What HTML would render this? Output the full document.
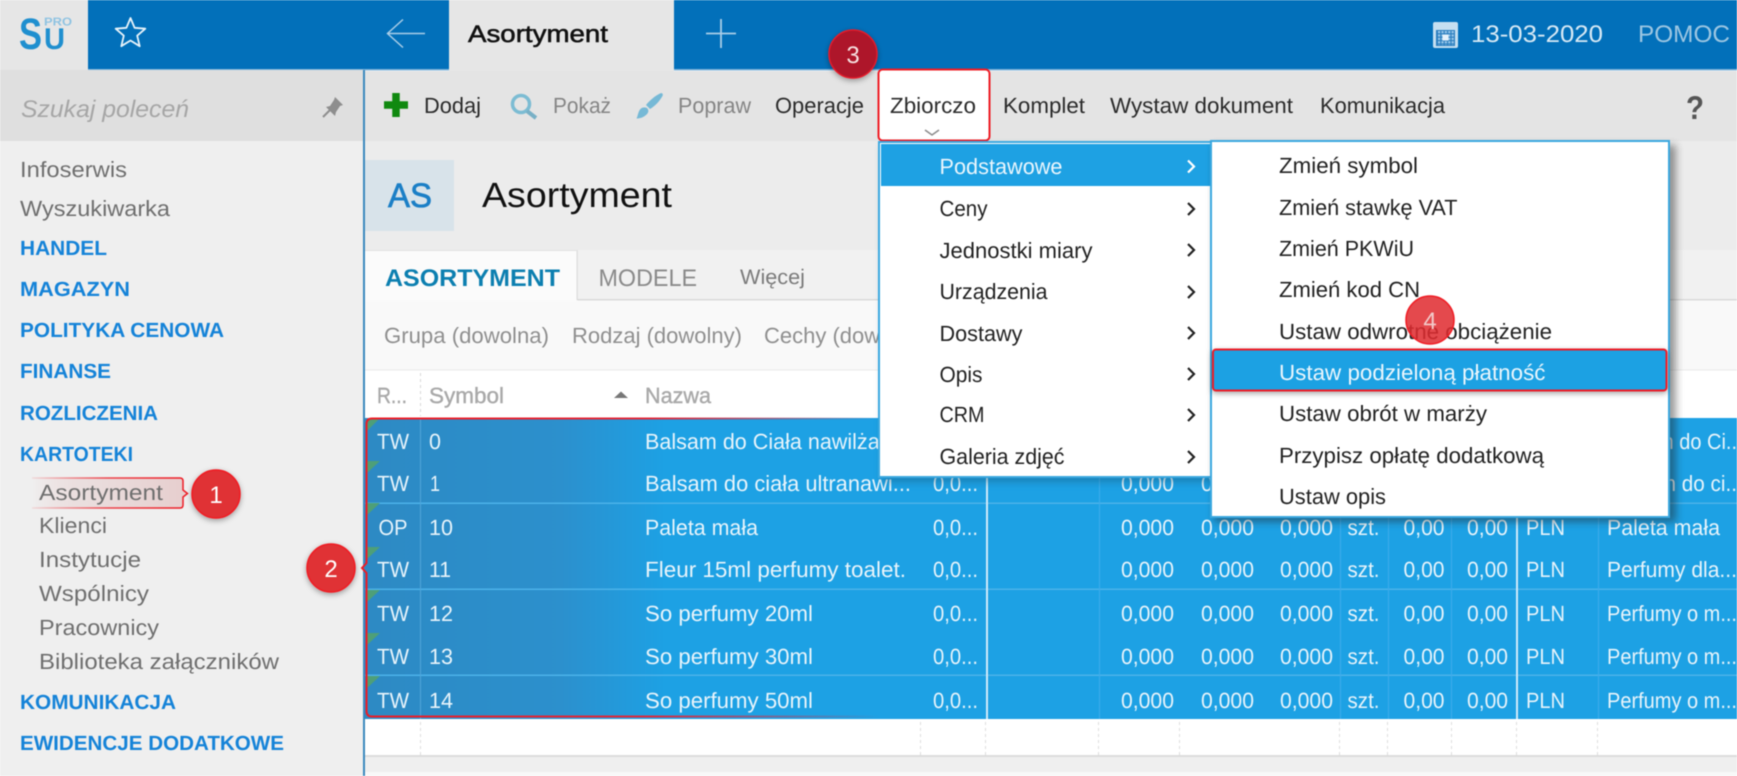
<!DOCTYPE html>
<html lang="pl"><head><meta charset="utf-8"><title>Asortyment</title>
<style>
html,body{margin:0;padding:0;width:1737px;height:776px;overflow:hidden;background:#fff}
svg{display:block;filter:blur(.45px)}
text{font-family:"Liberation Sans",sans-serif;font-size:22px;text-rendering:geometricPrecision}
.b{font-weight:700}
.s{fill:#6f6f6f}
.h{fill:#1583d8;font-weight:700;font-size:20.5px}
.k{fill:#2b2b2b}
.m{fill:#222}
.r{fill:#e8f4fb}
.c{fill:#fff;font-size:24px}
</style></head><body>
<svg xmlns="http://www.w3.org/2000/svg" width="1737" height="776" viewBox="0 0 1737 776">
<defs>
<linearGradient id="ov" gradientUnits="userSpaceOnUse" x1="366" x2="665" y1="0" y2="0"><stop offset="0" stop-color="#2d8ac4"/><stop offset=".65" stop-color="#2c90cd"/><stop offset="1" stop-color="#1da1e4"/></linearGradient>
<linearGradient id="rl" gradientUnits="userSpaceOnUse" x1="366" x2="880" y1="0" y2="0"><stop offset="0" stop-color="#ee1c25"/><stop offset=".55" stop-color="#e0283a"/><stop offset="1" stop-color="#e0283a" stop-opacity="0"/></linearGradient>
<linearGradient id="pk" gradientUnits="userSpaceOnUse" x1="32" x2="184" y1="0" y2="0"><stop offset="0" stop-color="#e9b9b9" stop-opacity="0"/><stop offset=".3" stop-color="#e6cfcf" stop-opacity=".5"/><stop offset="1" stop-color="#e3c0c0" stop-opacity=".7"/></linearGradient>
<linearGradient id="pl" gradientUnits="userSpaceOnUse" x1="32" x2="184" y1="0" y2="0"><stop offset="0" stop-color="#ee1c25" stop-opacity=".1"/><stop offset=".5" stop-color="#ee1c25" stop-opacity=".8"/><stop offset="1" stop-color="#ee1c25"/></linearGradient>
<filter id="sh" x="-10%" y="-10%" width="125%" height="125%"><feGaussianBlur stdDeviation="4"/></filter>
<filter id="cs" x="-30%" y="-30%" width="160%" height="160%"><feDropShadow dx="0" dy="2" stdDeviation="3" flood-color="#000" flood-opacity=".35"/></filter>
<pattern id="cal" width="3.4" height="3.4" patternUnits="userSpaceOnUse" x="1438" y="31"><rect width="2.2" height="2.2" fill="#9cc9ea"/></pattern>
</defs>

<!-- top bar -->
<rect x="0" y="0" width="1737" height="70" fill="#0270ba"/>
<rect x="0" y="0" width="88" height="70" fill="#e6e6e6"/>
<rect x="449" y="0" width="225" height="70" fill="#e6e6e6"/>
<rect x="88" y="69" width="1649" height="1.5" fill="#7fb4da"/>
<rect x="449" y="69" width="225" height="2" fill="#e6e6e6"/>
<text x="19" y="49" class="b" style="font-size:44px" fill="#1f8fcf" textLength="23" lengthAdjust="spacingAndGlyphs">S</text>
<text x="44" y="49" class="b" style="font-size:30px" fill="#1f8fcf" textLength="21" lengthAdjust="spacingAndGlyphs">U</text>
<text x="44" y="25.500" class="b" style="font-size:11.500px" fill="#8fc3e2" textLength="28" lengthAdjust="spacingAndGlyphs">PRO</text>
<path d="M130.5 18 L134.6 27.8 L145.3 28.7 L137.2 35.7 L139.7 46.2 L130.5 40.5 L121.3 46.2 L123.8 35.7 L115.7 28.7 L126.4 27.8 Z" fill="none" stroke="#e8f3fa" stroke-width="1.8" stroke-linejoin="round"/>
<path d="M425 33.500 H388 M403 19.500 L387.500 33.500 L403 47.500" fill="none" stroke="#a9cde7" stroke-width="1.500"/>
<text x="468" y="42" style="font-size:24px;stroke:#111;stroke-width:.55px" fill="#111" textLength="140" lengthAdjust="spacingAndGlyphs">Asortyment</text>
<path d="M706 33.500 H736 M721 19 V48" fill="none" stroke="#a9cde7" stroke-width="1.800"/>
<rect x="1433" y="22" width="25" height="26" rx="2" fill="#c5dff1"/>
<rect x="1436" y="30" width="19" height="16" fill="#2a7ebf"/>
<rect x="1437" y="31" width="17" height="14" fill="url(#cal)"/>
<rect x="1442.500" y="34.500" width="6" height="6" fill="#e6f2fb"/>
<text x="1471" y="42" style="font-size:24px" fill="#d7e9f5" textLength="132" lengthAdjust="spacingAndGlyphs">13-03-2020</text>
<text x="1638" y="42" style="font-size:24px" fill="#9cc6e2" textLength="92" lengthAdjust="spacingAndGlyphs">POMOC</text>

<!-- sidebar -->
<rect x="0" y="70" width="363" height="706" fill="#efefef"/>
<rect x="0" y="70" width="363" height="71" fill="#dfdfdf"/>
<rect x="363" y="70" width="2" height="706" fill="#3a88bd"/>
<text x="21" y="117" style="font-style:italic;font-size:24px" fill="#a6a6a6" textLength="168" lengthAdjust="spacingAndGlyphs">Szukaj poleceń</text>
<path d="M335 97 L343 105 L340 106 L336 112 L335 116 L326 107 L330 106 L334 100 Z" fill="#8e8e8e"/><path d="M330 110 L323 117" stroke="#8e8e8e" stroke-width="2"/>
<text x="20" y="177" class="s" textLength="107" lengthAdjust="spacingAndGlyphs">Infoserwis</text>
<text x="20" y="216" class="s" textLength="150" lengthAdjust="spacingAndGlyphs">Wyszukiwarka</text>
<text x="20" y="255" class="h" textLength="87" lengthAdjust="spacingAndGlyphs">HANDEL</text>
<text x="20" y="296" class="h" textLength="110" lengthAdjust="spacingAndGlyphs">MAGAZYN</text>
<text x="20" y="337" class="h" textLength="204" lengthAdjust="spacingAndGlyphs">POLITYKA CENOWA</text>
<text x="20" y="378" class="h" textLength="91" lengthAdjust="spacingAndGlyphs">FINANSE</text>
<text x="20" y="420" class="h" textLength="138" lengthAdjust="spacingAndGlyphs">ROZLICZENIA</text>
<text x="20" y="461" class="h" textLength="113" lengthAdjust="spacingAndGlyphs">KARTOTEKI</text>
<path d="M32 478 H180 Q183 478 183 481 V490 L187.500 493.500 L183 497 V505 Q183 508 180 508 H32 Z" fill="url(#pk)"/>
<path d="M32 478 H180 Q183 478 183 481 V490 L187.500 493.500 L183 497 V505 Q183 508 180 508 H32" fill="none" stroke="url(#pl)" stroke-width="1.500"/>
<text x="39" y="500" class="s" textLength="124" lengthAdjust="spacingAndGlyphs">Asortyment</text>
<text x="39" y="533" class="s" textLength="68" lengthAdjust="spacingAndGlyphs">Klienci</text>
<text x="39" y="567" class="s" textLength="102" lengthAdjust="spacingAndGlyphs">Instytucje</text>
<text x="39" y="601" class="s" textLength="110" lengthAdjust="spacingAndGlyphs">Wspólnicy</text>
<text x="39" y="635" class="s" textLength="120" lengthAdjust="spacingAndGlyphs">Pracownicy</text>
<text x="39" y="669" class="s" textLength="240" lengthAdjust="spacingAndGlyphs">Biblioteka załączników</text>
<text x="20" y="709" class="h" textLength="156" lengthAdjust="spacingAndGlyphs">KOMUNIKACJA</text>
<text x="20" y="750" class="h" textLength="264" lengthAdjust="spacingAndGlyphs">EWIDENCJE DODATKOWE</text>

<!-- toolbar -->
<rect x="365" y="71" width="1372" height="70" fill="#e4e4e4"/>
<rect x="365" y="141" width="1372" height="109" fill="#ececec"/>
<path d="M384 105 H408 M396 93 V117" stroke="#10890f" stroke-width="7.500"/>
<text x="424" y="113" class="k" textLength="57" lengthAdjust="spacingAndGlyphs">Dodaj</text>
<circle cx="521" cy="104" r="8.500" fill="none" stroke="#7cbcd3" stroke-width="3.500"/><path d="M527 111 L536 118" stroke="#78b0c6" stroke-width="4"/>
<text x="553" y="113" fill="#858585" textLength="58" lengthAdjust="spacingAndGlyphs">Pokaż</text>
<path d="M660 93.500 C662 92.500 663.500 94 662.500 96 C659 102 655 106 650 109 L646 105 C650 100 655 96 660 93.500 Z M636.500 118.500 C638 116 638 111 641 108.500 C643 107 646 107 647.500 108.500 C649 110.500 648.500 113 646 115 C643 117.500 640 118.500 636.500 118.500 Z" fill="#76b9d6"/>
<text x="678" y="113" fill="#858585" textLength="73" lengthAdjust="spacingAndGlyphs">Popraw</text>
<text x="775" y="113" class="k" textLength="89" lengthAdjust="spacingAndGlyphs">Operacje</text>
<text x="1003" y="113" class="k" textLength="82" lengthAdjust="spacingAndGlyphs">Komplet</text>
<text x="1110" y="113" class="k" textLength="183" lengthAdjust="spacingAndGlyphs">Wystaw dokument</text>
<text x="1320" y="113" class="k" textLength="125" lengthAdjust="spacingAndGlyphs">Komunikacja</text>
<text x="1686" y="119" class="b" style="font-size:33px" fill="#555" textLength="18" lengthAdjust="spacingAndGlyphs">?</text>

<!-- page head -->
<rect x="365" y="160" width="89" height="71" fill="#d8e3ea"/>
<text x="388" y="207" style="font-size:34px;stroke:#1b7fc6;stroke-width:.7px" fill="#1b7fc6" textLength="44" lengthAdjust="spacingAndGlyphs">AS</text>
<text x="482" y="207" style="font-size:35px" fill="#111" textLength="190" lengthAdjust="spacingAndGlyphs">Asortyment</text>

<!-- tabs -->
<rect x="365" y="250" width="1372" height="50" fill="#f1f1f1"/>
<rect x="365" y="299" width="1372" height="1.500" fill="#d9d9d9"/>
<rect x="365" y="250" width="212" height="51" fill="#fbfbfb"/>
<rect x="576.500" y="250" width="1.200" height="50" fill="#dcdcdc"/><rect x="365" y="250" width="212" height="1" fill="#e2e2e2"/>
<text x="385" y="286" class="b" style="font-size:24px" fill="#0c7fb0" textLength="175" lengthAdjust="spacingAndGlyphs">ASORTYMENT</text>
<text x="598.500" y="286" style="font-size:24px" fill="#8a8a8a" textLength="98.500" lengthAdjust="spacingAndGlyphs">MODELE</text>
<text x="740" y="284" style="font-size:21px" fill="#7b7b7b" textLength="65" lengthAdjust="spacingAndGlyphs">Więcej</text>

<!-- filters -->
<rect x="365" y="301" width="1372" height="69" fill="#f9f9f9"/>
<rect x="365" y="369.500" width="1372" height="1" fill="#eaeaea"/>
<text x="384" y="343" fill="#8f8f8f" textLength="165" lengthAdjust="spacingAndGlyphs">Grupa (dowolna)</text>
<text x="572" y="343" fill="#8f8f8f" textLength="170" lengthAdjust="spacingAndGlyphs">Rodzaj (dowolny)</text>
<text x="764" y="343" fill="#8f8f8f" textLength="165" lengthAdjust="spacingAndGlyphs">Cechy (dowolne)</text>

<!-- table header -->
<rect x="365" y="371" width="1372" height="47" fill="#fff"/>
<path d="M420.500 373 V416" stroke="#d8d8d8" stroke-dasharray="3 3"/>
<text x="377" y="403" fill="#a9a9a9" style="stroke:#a9a9a9;stroke-width:.4px" textLength="30" lengthAdjust="spacingAndGlyphs">R...</text>
<text x="429" y="403" fill="#a9a9a9" style="stroke:#a9a9a9;stroke-width:.4px" textLength="75" lengthAdjust="spacingAndGlyphs">Symbol</text>
<path d="M614 398 L621 391.500 L628 398 Z" fill="#777"/>
<text x="645" y="403" fill="#a9a9a9" style="stroke:#a9a9a9;stroke-width:.4px" textLength="66" lengthAdjust="spacingAndGlyphs">Nazwa</text>

<!-- table rows -->
<rect x="365" y="418" width="1372" height="301" fill="#1da1e4"/>
<rect x="365" y="418" width="300" height="301" fill="url(#ov)"/>
<g fill="#4bb2e9"><rect x="365" y="502.500" width="1372" height="1.500"/><rect x="365" y="588.500" width="1372" height="1.500"/><rect x="365" y="674.500" width="1372" height="1.500"/></g>
<g fill="#3eaceb"><rect x="420" y="418" width="1" height="301" fill="#4fa5d9"/><rect x="1099" y="418" width="1"  height="301"/><rect x="1340" y="418" width="1" height="301"/><rect x="1388" y="418" width="1" height="301"/><rect x="1451" y="418" width="1" height="301"/><rect x="1598" y="418" width="1" height="301"/></g>
<g fill="#cfeafa"><rect x="986" y="418" width="2" height="301"/><rect x="1516" y="418" width="2" height="301"/></g>
<g fill="#4e9f78"><path d="M367 419 H379 L367 431Z"/><path d="M367 461 H380 L367 473Z"/><path d="M367 503 H380 L367 515Z"/><path d="M367 547 H380 L367 559Z"/><path d="M367 590 H380 L367 602Z"/><path d="M367 633 H380 L367 645Z"/><path d="M367 676 H380 L367 688Z"/></g>

<text x="377" y="449" class="r" textLength="32" lengthAdjust="spacingAndGlyphs">TW</text><text x="429" y="449" class="r" textLength="12" lengthAdjust="spacingAndGlyphs">0</text>
<text x="645" y="449" class="r" textLength="273" lengthAdjust="spacingAndGlyphs">Balsam do Ciała nawilżający</text>
<text x="1607" y="449" class="r" textLength="130" lengthAdjust="spacingAndGlyphs">Balsam do Ci..</text>

<text x="377" y="491" class="r" textLength="32" lengthAdjust="spacingAndGlyphs">TW</text><text x="430" y="491" class="r" textLength="10" lengthAdjust="spacingAndGlyphs">1</text>
<text x="645" y="491" class="r" textLength="266" lengthAdjust="spacingAndGlyphs">Balsam do ciała ultranawi...</text>
<text x="933" y="491" class="r" textLength="45" lengthAdjust="spacingAndGlyphs">0,0...</text>
<text x="1121" y="491" class="r" textLength="53" lengthAdjust="spacingAndGlyphs">0,000</text><text x="1201" y="491" class="r" textLength="53" lengthAdjust="spacingAndGlyphs">0,000</text>
<text x="1607" y="491" class="r" textLength="130" lengthAdjust="spacingAndGlyphs">Balsam do ci..</text>

<text x="378.500" y="535" class="r" textLength="29" lengthAdjust="spacingAndGlyphs">OP</text><text x="429" y="535" class="r" textLength="24" lengthAdjust="spacingAndGlyphs">10</text>
<text x="645" y="535" class="r" textLength="113" lengthAdjust="spacingAndGlyphs">Paleta mała</text>
<text x="933" y="535" class="r" textLength="45" lengthAdjust="spacingAndGlyphs">0,0...</text>
<text x="1121" y="535" class="r" textLength="53" lengthAdjust="spacingAndGlyphs">0,000</text><text x="1201" y="535" class="r" textLength="53" lengthAdjust="spacingAndGlyphs">0,000</text><text x="1280" y="535" class="r" textLength="53" lengthAdjust="spacingAndGlyphs">0,000</text>
<text x="1347.500" y="535" class="r" textLength="32" lengthAdjust="spacingAndGlyphs">szt.</text><text x="1403.500" y="535" class="r" textLength="41" lengthAdjust="spacingAndGlyphs">0,00</text><text x="1467" y="535" class="r" textLength="41" lengthAdjust="spacingAndGlyphs">0,00</text><text x="1526" y="535" class="r" textLength="39" lengthAdjust="spacingAndGlyphs">PLN</text>
<text x="1607" y="535" class="r" textLength="113" lengthAdjust="spacingAndGlyphs">Paleta mała</text>

<text x="377" y="577" class="r" textLength="32" lengthAdjust="spacingAndGlyphs">TW</text><text x="429" y="577" class="r" textLength="22" lengthAdjust="spacingAndGlyphs">11</text>
<text x="645" y="577" class="r" textLength="261" lengthAdjust="spacingAndGlyphs">Fleur 15ml perfumy toalet.</text>
<text x="933" y="577" class="r" textLength="45" lengthAdjust="spacingAndGlyphs">0,0...</text>
<text x="1121" y="577" class="r" textLength="53" lengthAdjust="spacingAndGlyphs">0,000</text><text x="1201" y="577" class="r" textLength="53" lengthAdjust="spacingAndGlyphs">0,000</text><text x="1280" y="577" class="r" textLength="53" lengthAdjust="spacingAndGlyphs">0,000</text>
<text x="1347.500" y="577" class="r" textLength="32" lengthAdjust="spacingAndGlyphs">szt.</text><text x="1403.500" y="577" class="r" textLength="41" lengthAdjust="spacingAndGlyphs">0,00</text><text x="1467" y="577" class="r" textLength="41" lengthAdjust="spacingAndGlyphs">0,00</text><text x="1526" y="577" class="r" textLength="39" lengthAdjust="spacingAndGlyphs">PLN</text>
<text x="1607" y="577" class="r" textLength="130" lengthAdjust="spacingAndGlyphs">Perfumy dla...</text>

<text x="377" y="621" class="r" textLength="32" lengthAdjust="spacingAndGlyphs">TW</text><text x="429" y="621" class="r" textLength="24" lengthAdjust="spacingAndGlyphs">12</text>
<text x="645" y="621" class="r" textLength="168" lengthAdjust="spacingAndGlyphs">So perfumy 20ml</text>
<text x="933" y="621" class="r" textLength="45" lengthAdjust="spacingAndGlyphs">0,0...</text>
<text x="1121" y="621" class="r" textLength="53" lengthAdjust="spacingAndGlyphs">0,000</text><text x="1201" y="621" class="r" textLength="53" lengthAdjust="spacingAndGlyphs">0,000</text><text x="1280" y="621" class="r" textLength="53" lengthAdjust="spacingAndGlyphs">0,000</text>
<text x="1347.500" y="621" class="r" textLength="32" lengthAdjust="spacingAndGlyphs">szt.</text><text x="1403.500" y="621" class="r" textLength="41" lengthAdjust="spacingAndGlyphs">0,00</text><text x="1467" y="621" class="r" textLength="41" lengthAdjust="spacingAndGlyphs">0,00</text><text x="1526" y="621" class="r" textLength="39" lengthAdjust="spacingAndGlyphs">PLN</text>
<text x="1607" y="621" class="r" textLength="130" lengthAdjust="spacingAndGlyphs">Perfumy o m...</text>

<text x="377" y="664" class="r" textLength="32" lengthAdjust="spacingAndGlyphs">TW</text><text x="429" y="664" class="r" textLength="24" lengthAdjust="spacingAndGlyphs">13</text>
<text x="645" y="664" class="r" textLength="168" lengthAdjust="spacingAndGlyphs">So perfumy 30ml</text>
<text x="933" y="664" class="r" textLength="45" lengthAdjust="spacingAndGlyphs">0,0...</text>
<text x="1121" y="664" class="r" textLength="53" lengthAdjust="spacingAndGlyphs">0,000</text><text x="1201" y="664" class="r" textLength="53" lengthAdjust="spacingAndGlyphs">0,000</text><text x="1280" y="664" class="r" textLength="53" lengthAdjust="spacingAndGlyphs">0,000</text>
<text x="1347.500" y="664" class="r" textLength="32" lengthAdjust="spacingAndGlyphs">szt.</text><text x="1403.500" y="664" class="r" textLength="41" lengthAdjust="spacingAndGlyphs">0,00</text><text x="1467" y="664" class="r" textLength="41" lengthAdjust="spacingAndGlyphs">0,00</text><text x="1526" y="664" class="r" textLength="39" lengthAdjust="spacingAndGlyphs">PLN</text>
<text x="1607" y="664" class="r" textLength="130" lengthAdjust="spacingAndGlyphs">Perfumy o m...</text>

<text x="377" y="708" class="r" textLength="32" lengthAdjust="spacingAndGlyphs">TW</text><text x="429" y="708" class="r" textLength="24" lengthAdjust="spacingAndGlyphs">14</text>
<text x="645" y="708" class="r" textLength="168" lengthAdjust="spacingAndGlyphs">So perfumy 50ml</text>
<text x="933" y="708" class="r" textLength="45" lengthAdjust="spacingAndGlyphs">0,0...</text>
<text x="1121" y="708" class="r" textLength="53" lengthAdjust="spacingAndGlyphs">0,000</text><text x="1201" y="708" class="r" textLength="53" lengthAdjust="spacingAndGlyphs">0,000</text><text x="1280" y="708" class="r" textLength="53" lengthAdjust="spacingAndGlyphs">0,000</text>
<text x="1347.500" y="708" class="r" textLength="32" lengthAdjust="spacingAndGlyphs">szt.</text><text x="1403.500" y="708" class="r" textLength="41" lengthAdjust="spacingAndGlyphs">0,00</text><text x="1467" y="708" class="r" textLength="41" lengthAdjust="spacingAndGlyphs">0,00</text><text x="1526" y="708" class="r" textLength="39" lengthAdjust="spacingAndGlyphs">PLN</text>
<text x="1607" y="708" class="r" textLength="130" lengthAdjust="spacingAndGlyphs">Perfumy o m...</text>

<!-- selection annotation -->
<path d="M880 418.500 H372 Q366.500 418.500 366.500 424 V563 L362 568 L366.500 573 V711 Q366.500 716.500 372 716.500 H880" fill="none" stroke="url(#rl)" stroke-width="2"/>

<!-- empty grid + scrollbar -->
<rect x="365" y="719" width="1372" height="36" fill="#fff"/>
<path d="M420.500 722 V755 M920.500 722 V755 M985.500 722 V755 M1098.500 722 V755 M1179.500 722 V755 M1339.500 722 V755 M1387.500 722 V755 M1451.500 722 V755 M1516.500 722 V755 M1597.500 722 V755" stroke="#dcdcdc" stroke-dasharray="3 3"/>
<rect x="365" y="755" width="1372" height="2" fill="#dcdcdc"/>
<rect x="365" y="757" width="1372" height="15" fill="#efefef"/>
<rect x="365" y="772" width="1372" height="4" fill="#f8f8f8"/>

<!-- Zbiorczo button -->
<rect x="878.500" y="69.500" width="111" height="71" rx="4" fill="#fff" stroke="#ee1c25" stroke-width="2"/>
<text x="890" y="113" class="k" textLength="86" lengthAdjust="spacingAndGlyphs">Zbiorczo</text>
<path d="M925 130 L932 135 L939 130" fill="none" stroke="#8a8a8a" stroke-width="1.500"/>

<!-- menu 1 -->
<rect x="882" y="146" width="334" height="336" fill="#15516f" opacity=".4" filter="url(#sh)"/>
<rect x="879" y="142" width="333" height="335" fill="#fff" stroke="#3aa8e0" stroke-width="2"/>
<rect x="881" y="144" width="330" height="42" fill="#1ea1e3"/>
<text x="939.500" y="174" fill="#eaf6fd" textLength="123" lengthAdjust="spacingAndGlyphs">Podstawowe</text>
<text x="939.500" y="216" class="m" textLength="48" lengthAdjust="spacingAndGlyphs">Ceny</text>
<text x="939.500" y="258" class="m" textLength="153" lengthAdjust="spacingAndGlyphs">Jednostki miary</text>
<text x="939.500" y="299" class="m" textLength="108" lengthAdjust="spacingAndGlyphs">Urządzenia</text>
<text x="939.500" y="341" class="m" textLength="83" lengthAdjust="spacingAndGlyphs">Dostawy</text>
<text x="939.500" y="382" class="m" textLength="43" lengthAdjust="spacingAndGlyphs">Opis</text>
<text x="939.500" y="422" class="m" textLength="45" lengthAdjust="spacingAndGlyphs">CRM</text>
<text x="939.500" y="464" class="m" textLength="125" lengthAdjust="spacingAndGlyphs">Galeria zdjęć</text>
<path d="M1188 160.500 L1194 166.500 L1188 172.500" fill="none" stroke="#fff" stroke-width="2.200"/>
<g fill="none" stroke="#222" stroke-width="2.200"><path d="M1188 203 L1194 209 L1188 215"/><path d="M1188 244 L1194 250 L1188 256"/><path d="M1188 286 L1194 292 L1188 298"/><path d="M1188 327 L1194 333 L1188 339"/><path d="M1188 368 L1194 374 L1188 380"/><path d="M1188 409 L1194 415 L1188 421"/><path d="M1188 451 L1194 457 L1188 463"/></g>

<!-- menu 2 -->
<rect x="1214" y="145" width="462" height="377" fill="#222" opacity=".45" filter="url(#sh)"/>
<rect x="1211" y="141" width="458" height="376" fill="#fff" stroke="#3aa8e0" stroke-width="2"/>
<text x="1279" y="173" class="m" textLength="139" lengthAdjust="spacingAndGlyphs">Zmień symbol</text>
<text x="1279" y="215" class="m" textLength="178.500" lengthAdjust="spacingAndGlyphs">Zmień stawkę VAT</text>
<text x="1279" y="256" class="m" textLength="135" lengthAdjust="spacingAndGlyphs">Zmień PKWiU</text>
<text x="1279" y="297" class="m" textLength="141" lengthAdjust="spacingAndGlyphs">Zmień kod CN</text>
<text x="1279" y="339" class="m" textLength="273" lengthAdjust="spacingAndGlyphs">Ustaw odwrotne obciążenie</text>
<rect x="1213" y="349.500" width="453.500" height="41" rx="3" fill="#1ea1e3" stroke="#ee1c25" stroke-width="2" filter="url(#cs)"/>
<text x="1279" y="380" fill="#eaf6fd" textLength="266.500" lengthAdjust="spacingAndGlyphs">Ustaw podzieloną płatność</text>
<text x="1279" y="421" class="m" textLength="208" lengthAdjust="spacingAndGlyphs">Ustaw obrót w marży</text>
<text x="1279" y="463" class="m" textLength="265" lengthAdjust="spacingAndGlyphs">Przypisz opłatę dodatkową</text>
<text x="1279" y="504" class="m" textLength="107" lengthAdjust="spacingAndGlyphs">Ustaw opis</text>

<!-- number badges -->
<circle cx="216" cy="494" r="24" fill="#e03035" stroke="#f01c24" stroke-width="1.500" filter="url(#cs)"/>
<text x="216" y="503" class="c" text-anchor="middle">1</text>
<circle cx="331" cy="568" r="24" fill="#e03035" stroke="#f01c24" stroke-width="1.500" filter="url(#cs)"/>
<text x="331" y="577" class="c" text-anchor="middle">2</text>
<circle cx="853" cy="54" r="24" fill="#ae1729" stroke="#e51b2b" stroke-width="1.500" filter="url(#cs)"/>
<text x="853" y="63" class="c" text-anchor="middle" style="fill:#f6e0e0">3</text>
<circle cx="1430" cy="320" r="24" fill="#e02b30" fill-opacity=".86" stroke="#f01c24" stroke-width="1.500"/>
<text x="1430" y="329" class="c" text-anchor="middle" style="fill:#f2caca">4</text>
</svg>
</body></html>
